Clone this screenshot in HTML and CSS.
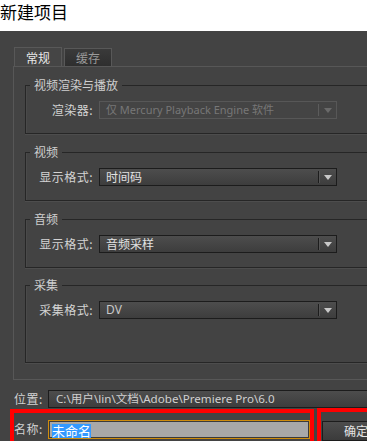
FILE: index.html
```html
<!DOCTYPE html>
<html lang="zh">
<head>
<meta charset="utf-8">
<title>新建项目</title>
<link rel="stylesheet" href="styles.css">
</head>
<body>
<div class="title">新建项目</div>
<div class="dialog">
  <div class="tabs">
    <div class="tab active">常规</div>
    <div class="tab">缓存</div>
  </div>
  <div class="panel">
    <div class="group g1">
      <div class="legend"><span>视频渲染与播放</span></div>
      <div class="row">
        <div class="label">渲染器:</div>
        <div class="select disabled"><span class="val">仅 Mercury Playback Engine 软件</span><span class="arrow"></span></div>
      </div>
    </div>
    <div class="group g2">
      <div class="legend"><span>视频</span></div>
      <div class="row">
        <div class="label">显示格式:</div>
        <div class="select"><span class="val">时间码</span><span class="arrow"></span></div>
      </div>
    </div>
    <div class="group g3">
      <div class="legend"><span>音频</span></div>
      <div class="row">
        <div class="label">显示格式:</div>
        <div class="select"><span class="val">音频采样</span><span class="arrow"></span></div>
      </div>
    </div>
    <div class="group g4">
      <div class="legend"><span>采集</span></div>
      <div class="row">
        <div class="label">采集格式:</div>
        <div class="select"><span class="val latin">DV</span><span class="arrow"></span></div>
      </div>
    </div>
  </div>
  <div class="loc-row">
    <div class="flabel">位置:</div>
    <div class="loc">C:\用户\lin\文档\Adobe\Premiere Pro\6.0</div>
  </div>
  <div class="bottom">
    <div class="mark name-box">
      <div class="flabel">名称:</div>
      <div class="name-input"><span class="sel">未命名</span></div>
    </div>
    <div class="mark btn-box">
      <div class="btn">确定</div>
    </div>
  </div>
</div>
</body>
</html>
```

FILE: styles.css
```css
html, body {
  margin: 0;
  padding: 0;
}
body {
  width: 367px;
  height: 441px;
  overflow: hidden;
  background: #434343;
  font-family: "Noto Sans", "Noto Sans CJK SC", sans-serif;
  font-size: 12px;
  color: #d2d2d2;
}
.title {
  height: 31px;
  background: #fff;
  color: #000;
  font-family: "Noto Sans CJK SC", sans-serif;
  font-size: 17px;
  line-height: 24px;
}
.dialog {
  height: 410px;
  padding: 16px 0 0 13px;
  box-sizing: border-box;
  background: #434343;
}
.tabs {
  display: flex;
  align-items: flex-end;
  gap: 2px;
  margin-left: 1px;
  height: 19px;
}
.tab {
  width: 48px;
  height: 18px;
  box-sizing: border-box;
  border: 1px solid #585858;
  border-bottom: none;
  background: linear-gradient(#3a3a3a, #2e2e2e);
  color: #9a9a9a;
  font-family: "Noto Sans CJK SC", sans-serif;
  font-size: 12px;
  line-height: 17px;
  text-align: center;
}
.tab.active {
  height: 19px;
  background: #454545;
  color: #e8e8e8;
  line-height: 19px;
}
.panel {
  border-top: 1px solid #575757;
  border-left: 1px solid #575757;
  border-bottom: 1px solid #575757;
  padding: 18px 0 16px 11px;
}
.group {
  border: 1px solid #262626;
  border-right: none;
  box-shadow: 0 1px 0 #4d4d4d, inset 1px 0 0 #4a4a4a;
  padding: 0 0 14px 0;
}
.g2, .g3 { margin-top: 18px; }
.g4 { margin-top: 17px; padding-bottom: 43px; }
.legend {
  margin: -9px 0 0 4px;
  height: 16px;
  line-height: 16px;
  font-family: "Noto Sans CJK SC", sans-serif;
  font-size: 12px;
  color: #cfcfcf;
}
.legend span {
  background: #434343;
  padding: 0 4px;
}
.row {
  display: flex;
  align-items: center;
  margin-top: 8px;
}
.label {
  width: 67px;
  padding-right: 6px;
  text-align: right;
  font-family: "Noto Sans CJK SC", sans-serif;
  font-size: 12px;
  line-height: 18px;
  color: #d4d4d4;
  letter-spacing: 0.5px;
}
.select {
  width: 238px;
  height: 18px;
  box-sizing: border-box;
  border: 1px solid #1c1c1c;
  background: linear-gradient(#4d4d4d, #3d3d3d);
  display: flex;
  align-items: center;
  justify-content: space-between;
}
.select .val {
  padding-left: 6px;
  font-family: "Noto Sans CJK SC", sans-serif;
  font-size: 12px;
  line-height: 16px;
  color: #e2e2e2;
  white-space: nowrap;
}
.select .val.latin {
  font-family: "Noto Sans", sans-serif;
  color: #c8c8c8;
}
.select .arrow {
  width: 17px;
  height: 12px;
  border-left: 1px solid #1c1c1c;
  box-shadow: inset 1px 0 0 #555;
  display: flex;
  align-items: center;
  justify-content: center;
}
.select .arrow::after {
  content: "";
  border-left: 4px solid transparent;
  border-right: 4px solid transparent;
  border-top: 5px solid #c8c8c8;
  margin-top: 1px;
}
.select.disabled {
  border-color: #575757;
  background: #444;
}
.select.disabled .val {
  font-family: "Noto Sans", "Noto Sans CJK SC", sans-serif;
  color: #777;
  font-size: 11px;
}
.select.disabled .arrow {
  border-left-color: #5c5c5c;
  box-shadow: none;
}
.select.disabled .arrow::after {
  border-top-color: #6a6a6a;
}
.loc-row {
  display: flex;
  margin-top: 10px;
  margin-left: 1px;
  height: 18px;
  align-items: center;
}
.flabel {
  width: 34px;
  flex: none;
  font-family: "Noto Sans CJK SC", sans-serif;
  font-size: 12px;
  line-height: 18px;
  color: #d2d2d2;
  letter-spacing: 0.5px;
}
.loc {
  flex: 1;
  height: 18px;
  box-sizing: border-box;
  border: 1px solid #1c1c1c;
  border-right: none;
  background: linear-gradient(#4d4d4d, #3d3d3d);
  padding-left: 7px;
  font-family: "Noto Sans", "Noto Sans CJK SC", sans-serif;
  font-size: 11.6px;
  line-height: 16px;
  color: #d0d0d0;
  white-space: nowrap;
  overflow: hidden;
}
.bottom {
  display: flex;
  margin-left: -3px;
  gap: 3px;
  align-items: flex-start;
}
.mark {
  border: 4px solid #ff0000;
  border-bottom: none;
  height: 40px;
}
.name-box {
  width: 296px;
  flex: none;
  display: flex;
  align-items: flex-start;
  padding-top: 7px;
  margin-top: 1px;
}
.name-input {
  width: 262px;
  height: 19px;
  box-sizing: border-box;
  border: 1px solid #cf8c0c;
  box-shadow: inset 0 0 0 1px #3a3a3a;
  background: #a8a8a8;
  padding: 2px 0 0 3px;
}
.sel {
  display: inline-block;
  background: #3399ff;
  color: #fff;
  font-family: "Noto Sans CJK SC", sans-serif;
  font-size: 13px;
  line-height: 14px;
  height: 14px;
}
.btn-box {
  flex: 1;
  min-width: 0;
  border-right: none;
  padding: 9px 0 0 1px;
}
.btn {
  height: 20px;
  box-sizing: border-box;
  border: 1px solid #1c1c1c;
  border-right: none;
  background: linear-gradient(#4d4d4d, #3b3b3b);
  color: #e4e4e4;
  font-family: "Noto Sans CJK SC", sans-serif;
  font-size: 12px;
  line-height: 18px;
  padding-left: 21px;
  white-space: nowrap;
  overflow: hidden;
}
```
